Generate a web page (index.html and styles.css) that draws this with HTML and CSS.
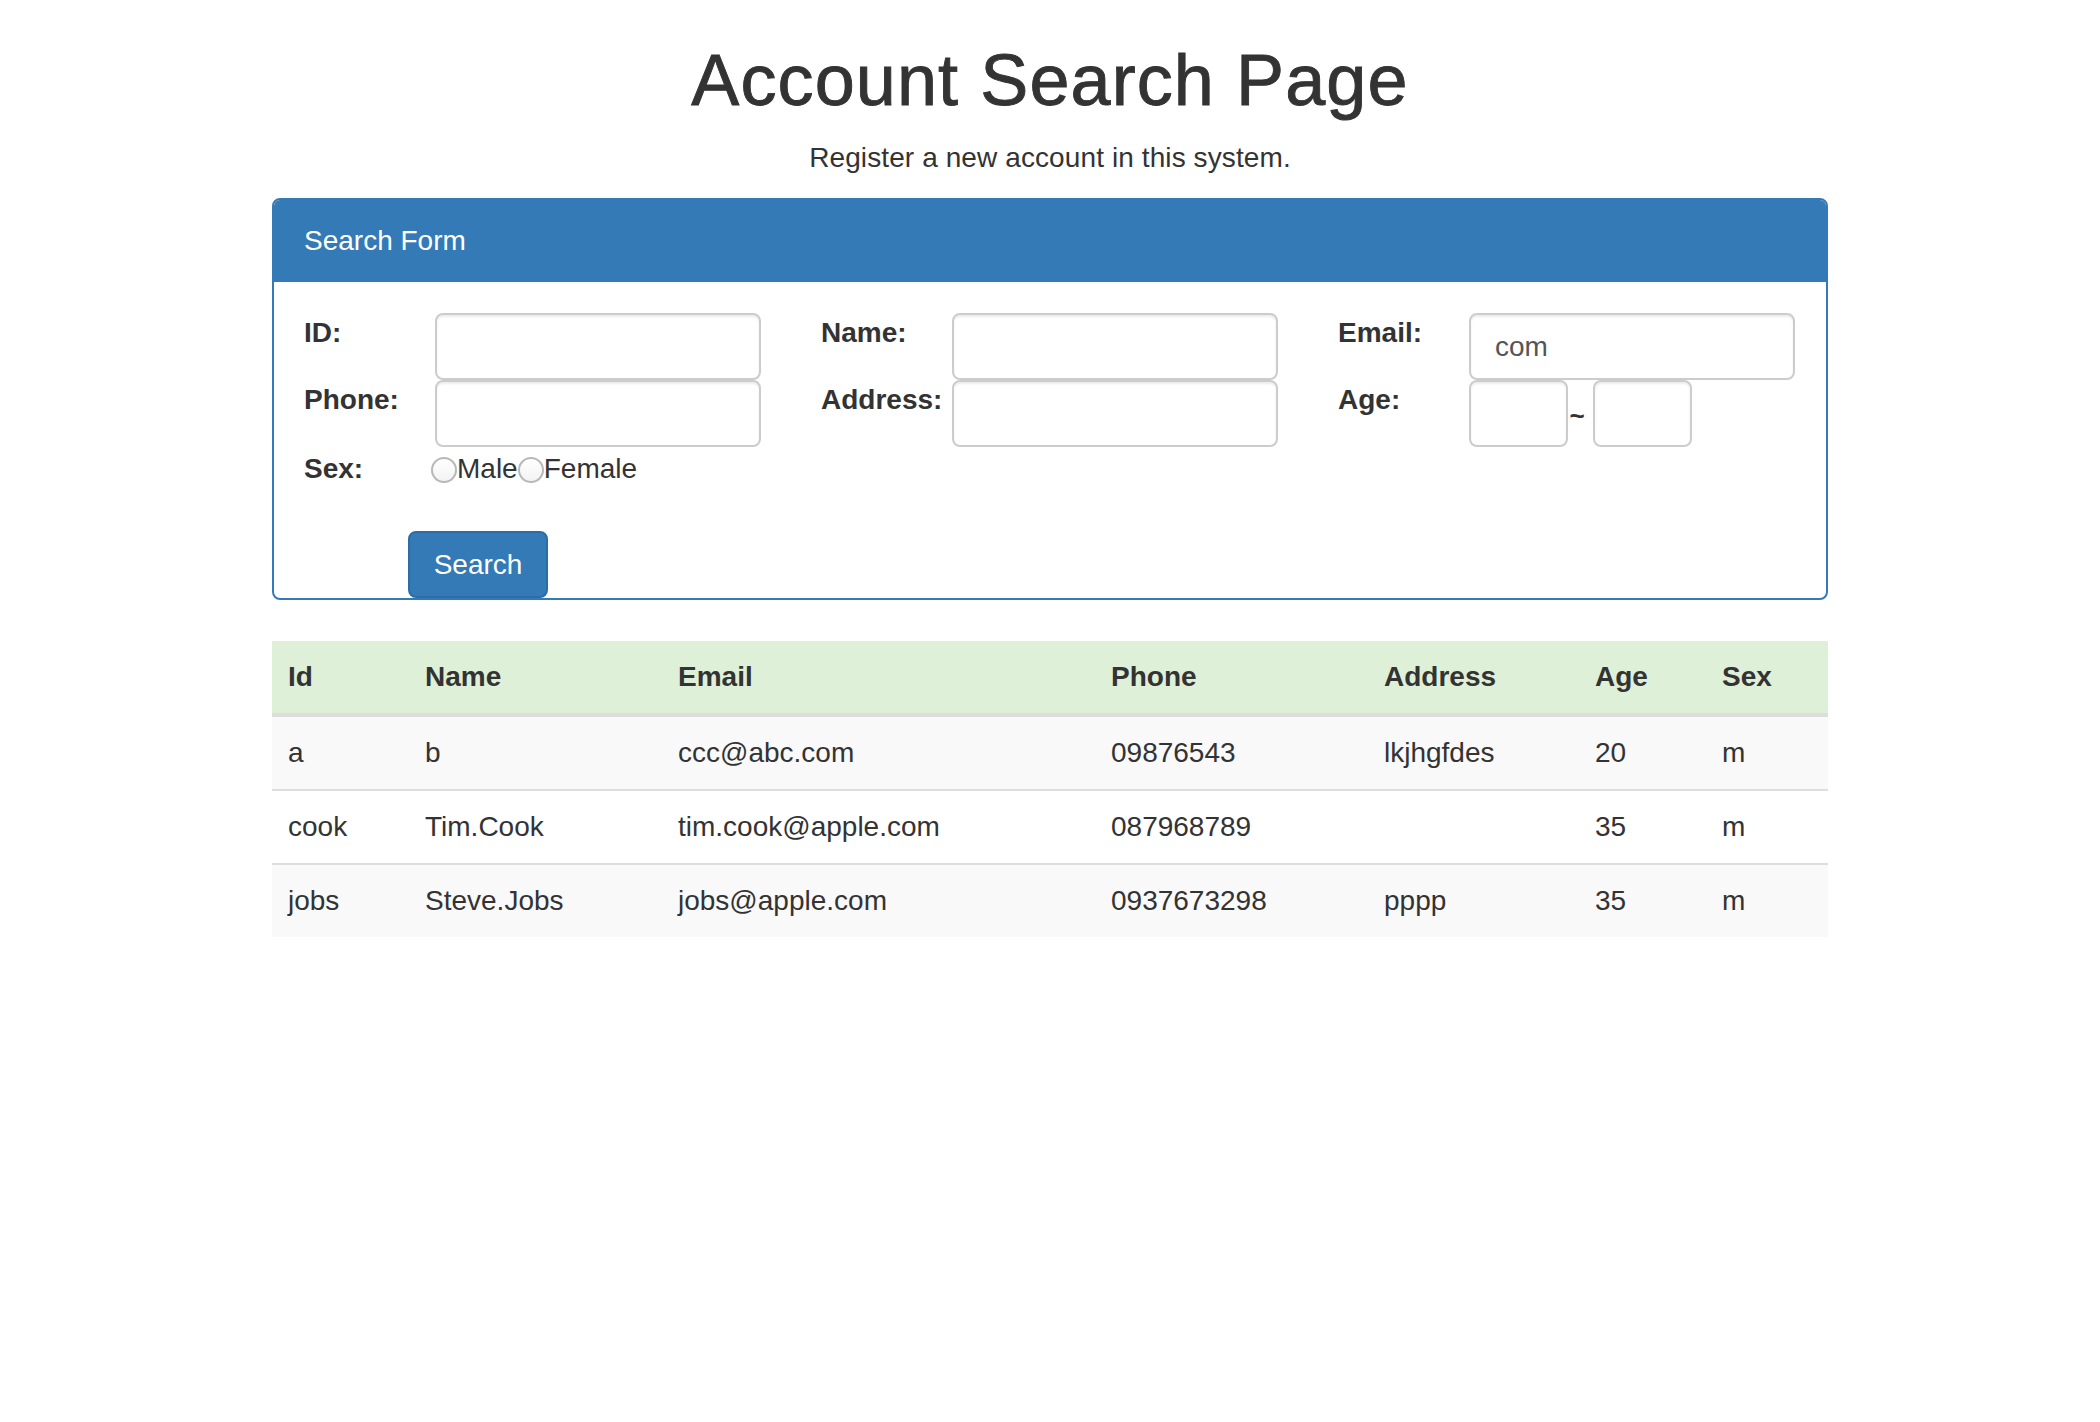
FILE: index.html
```html
<!DOCTYPE html>
<html lang="en">
<head>
<meta charset="utf-8">
<title>Account Search Page</title>
<link rel="stylesheet" href="styles.css">
</head>
<body>
<div class="container">
  <h1 class="title">Account Search Page</h1>
  <p class="lead">Register a new account in this system.</p>

  <div class="panel">
    <div class="panel-heading">Search Form</div>
    <div class="panel-body">
      <div class="fields">
        <div class="field"><label class="label">ID:</label><input class="control" type="text"></div>
        <div class="field"><label class="label">Name:</label><input class="control" type="text"></div>
        <div class="field"><label class="label">Email:</label><input class="control" type="text" value="com"></div>
        <div class="field"><label class="label">Phone:</label><input class="control" type="text"></div>
        <div class="field"><label class="label">Address:</label><input class="control" type="text"></div>
        <div class="field"><label class="label">Age:</label>
          <div class="age">
            <input class="control small" type="text"><span class="tilde">~</span><input class="control small" type="text">
          </div>
        </div>
        <div class="field sex"><label class="label">Sex:</label>
          <div class="radios">
            <input class="radio" type="radio" name="sex"><span>Male</span><input class="radio" type="radio" name="sex"><span>Female</span>
          </div>
        </div>
      </div>
      <div class="actions"><button class="btn" type="button">Search</button></div>
    </div>
  </div>

  <table class="grid">
    <colgroup>
      <col class="c-id"><col class="c-name"><col class="c-email"><col class="c-phone"><col class="c-addr"><col class="c-age"><col class="c-sex">
    </colgroup>
    <thead>
      <tr><th>Id</th><th>Name</th><th>Email</th><th>Phone</th><th>Address</th><th>Age</th><th>Sex</th></tr>
    </thead>
    <tbody>
      <tr><td>a</td><td>b</td><td>ccc@abc.com</td><td>09876543</td><td>lkjhgfdes</td><td>20</td><td>m</td></tr>
      <tr><td>cook</td><td>Tim.Cook</td><td>tim.cook@apple.com</td><td>087968789</td><td></td><td>35</td><td>m</td></tr>
      <tr><td>jobs</td><td>Steve.Jobs</td><td>jobs@apple.com</td><td>0937673298</td><td>pppp</td><td>35</td><td>m</td></tr>
    </tbody>
  </table>
</div>
</body>
</html>
```

FILE: styles.css
```css
html, body {
  margin: 0;
  padding: 0;
  background: #ffffff;
}
body {
  font-family: "Liberation Sans", Arial, Helvetica, sans-serif;
  font-size: 28px;
  line-height: 40px;
  color: #333333;
}
.container {
  width: 1556px;
  margin: 0 auto;
}
.title {
  margin: 41px 0 18px;
  font-size: 72px;
  line-height: 79px;
  font-weight: 500;
  text-align: center;
  letter-spacing: 1.1px;
  color: #333333;
  -webkit-text-stroke: 0.9px #333333;
}
.lead {
  margin: 0 0 20px;
  text-align: center;
  letter-spacing: 0.1px;
}
.panel {
  border: 2px solid #337ab7;
  border-radius: 8px;
  margin-bottom: 41px;
  overflow: hidden;
}
.panel-heading {
  background: #337ab7;
  color: #ffffff;
  padding: 21px 30px 21px;
  line-height: 40px;
  font-size: 28px;
}
.panel-body {
  padding: 31px 30px 0;
}
.fields {
  display: grid;
  grid-template-columns: 457px 457px 457px;
  column-gap: 60px;
}
.field {
  display: flex;
  align-items: flex-start;
  height: 67px;
}
.field.sex {
  height: 40px;
  margin-top: 2px;
}
.label {
  width: 131px;
  flex: none;
  font-weight: bold;
  line-height: 40px;
}
.control {
  box-sizing: border-box;
  width: 326px;
  height: 67px;
  border: 2px solid #cccccc;
  border-radius: 8px;
  box-shadow: inset 0 2px 2px rgba(0, 0, 0, 0.075);
  padding: 0 24px;
  font-family: "Liberation Sans", Arial, Helvetica, sans-serif;
  font-size: 28px;
  color: #555555;
  background: #ffffff;
  margin: 0;
}
.age {
  display: flex;
  align-items: center;
}
.control.small {
  width: 99px;
}
.tilde {
  width: 18px;
  margin-right: 7px;
  text-align: center;
  font-size: 26px;
  line-height: 20px;
  padding-top: 4px;
  font-weight: bold;
}
.radios {
  display: flex;
  align-items: center;
  height: 40px;
  margin-left: -4px;
}
.radio {
  -webkit-appearance: none;
  appearance: none;
  box-sizing: border-box;
  width: 26px;
  height: 26px;
  margin: 2px 0 0;
  border: 2px solid #b8b8b8;
  border-radius: 50%;
  background: linear-gradient(#ffffff, #f3f3f3);
  flex: none;
}
.actions {
  padding: 42px 0 0 104px;
  line-height: 0;
}
.btn {
  box-sizing: border-box;
  height: 67px;
  width: 140px;
  padding: 0;
  background: #337ab7;
  border: 2px solid #2e6da4;
  border-radius: 8px;
  color: #ffffff;
  font-family: "Liberation Sans", Arial, Helvetica, sans-serif;
  font-size: 28px;
  line-height: 40px;
  vertical-align: bottom;
}
.grid {
  width: 1556px;
  table-layout: fixed;
  border-collapse: collapse;
  border-spacing: 0;
}
.c-id { width: 137px; }
.c-name { width: 253px; }
.c-email { width: 433px; }
.c-phone { width: 273px; }
.c-addr { width: 211px; }
.c-age { width: 127px; }
.c-sex { width: 122px; }
.grid th {
  background: #dff0d8;
  text-align: left;
  font-weight: bold;
  padding: 16px;
  line-height: 40px;
  border-bottom: 4px solid #dddddd;
}
.grid td {
  padding: 16px;
  line-height: 40px;
  border-top: 2px solid #dddddd;
}
.grid tbody tr:first-child td {
  border-top: none;
}
.grid tbody tr:nth-child(odd) td {
  background: #f9f9f9;
}
```
